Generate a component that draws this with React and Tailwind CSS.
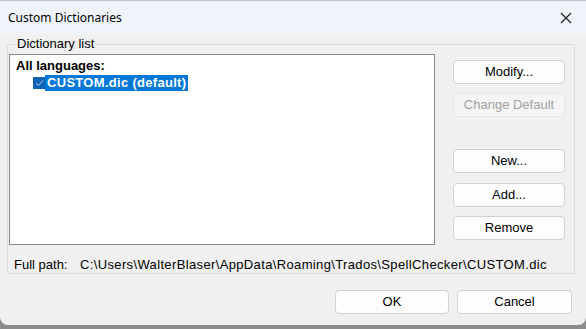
const UI = { fontFamily: '"Liberation Sans", Arial, sans-serif' }

function Btn({ children, disabled, className = '' }) {
  return (
    <div
      className={`flex items-center justify-center rounded-[4px] border text-[13px] ${
        disabled ? 'border-[#e6e6e6] bg-[#f5f5f5] text-[#a2a2a2]' : 'border-[#d0d0d0] bg-[#fdfdfd] text-black'
      } ${className}`}
    >
      {children}
    </div>
  )
}

export default function App() {
  return (
    <div className="w-[586px] h-[329px] bg-[#8c8c8c] overflow-hidden" style={UI}>
      <div className="h-[325px] flex flex-col bg-[#f0f0f0] rounded-b-[8px] overflow-hidden border-t border-[#bfc4c8]">
        {/* title bar */}
        <div className="h-[33px] shrink-0 bg-[#eef4f9] flex items-center justify-between pl-[8px] pr-[10px]">
          <span className="text-[12px] text-black" style={{ fontFamily: '"Segoe UI", "Noto Sans", sans-serif' }}>
            Custom Dictionaries
          </span>
          <svg width="12" height="12" viewBox="0 0 12 12" className="mr-[4px]">
            <path d="M1 1 L11 11 M11 1 L1 11" stroke="#1a1a1a" strokeWidth="1.1" />
          </svg>
        </div>

        {/* body */}
        <div className="flex-1 flex flex-col px-[7px] pr-[11px]">
          <fieldset className="mt-[2px] h-[238px] border border-[#dcdcdc] rounded-[2px] px-[1px] pb-[2px] flex flex-col">
            <legend className="ml-[6px] px-[2px] text-[13px] leading-[16px] text-black">Dictionary list</legend>
            <div className="flex gap-[18px] mt-[2px]">
              <div className="w-[426px] h-[191px] border border-[#828790] bg-white pt-[3px] pl-[6px]">
                <div className="text-[13px] font-bold leading-[15px] text-black">All languages:</div>
                <div className="flex items-center mt-[2px] ml-[17px]">
                  <span className="w-[12px] h-[12px] bg-[#0a63b5] flex items-center justify-center">
                    <svg width="9" height="8" viewBox="0 0 9 8">
                      <path d="M1 4.2 L3.4 6.5 L8 1.5" stroke="#b9d4ee" strokeWidth="1" fill="none" />
                    </svg>
                  </span>
                  <span className="h-[16px] px-[2px] bg-[#0078d7] text-white text-[13px] font-bold leading-[16px] tracking-[0.3px]">
                    CUSTOM.dic (default)
                  </span>
                </div>
              </div>
              <div className="flex flex-col w-[112px] pt-[6px]">
                <Btn className="h-[24px]">Modify...</Btn>
                <Btn disabled className="h-[24px] mt-[9px]">Change Default</Btn>
                <Btn className="h-[24px] mt-[32px]">New...</Btn>
                <Btn className="h-[24px] mt-[10px]">Add...</Btn>
                <Btn className="h-[24px] mt-[9px]">Remove</Btn>
              </div>
            </div>
            <div className="flex items-center text-[13px] text-black mt-[10px] pl-[5px]">
              <span className="w-[66px]">Full path:</span>
              <span className="tracking-[0.36px]">C:\Users\WalterBlaser\AppData\Roaming\Trados\SpellChecker\CUSTOM.dic</span>
            </div>
          </fieldset>

          <div className="flex justify-end gap-[8px] mt-[16px] pr-[3px]">
            <Btn className="w-[114px] h-[24px]">OK</Btn>
            <Btn className="w-[115px] h-[24px]">Cancel</Btn>
          </div>
        </div>
      </div>
    </div>
  )
}
